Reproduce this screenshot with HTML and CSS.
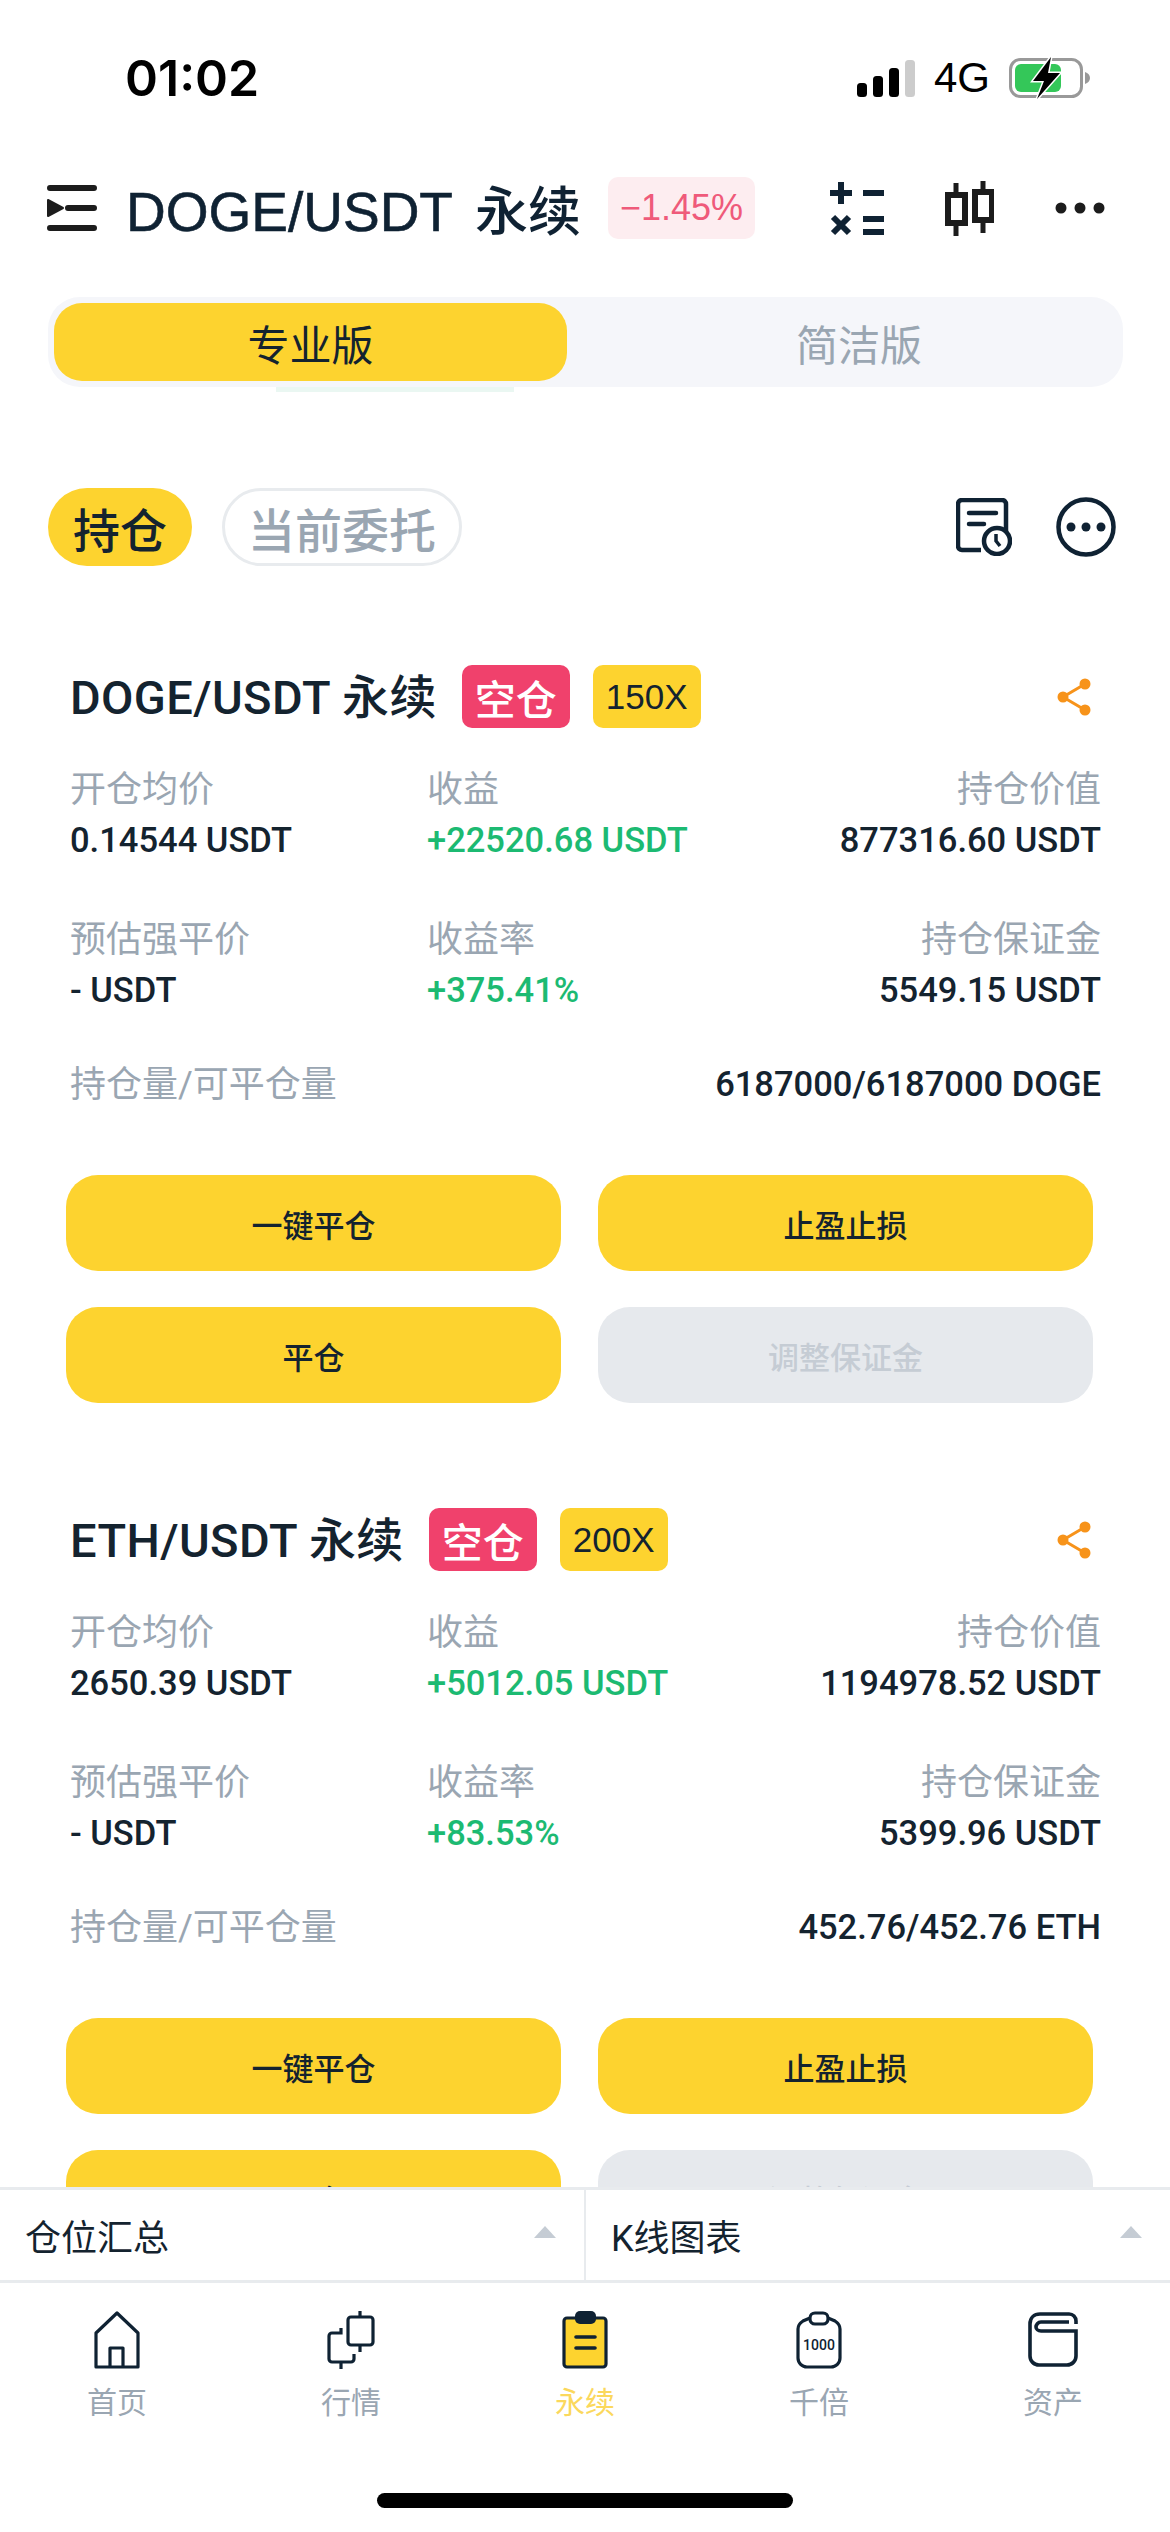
FILE: index.html

```html
<!DOCTYPE html>
<html lang="zh-CN">
<head>
  <meta charset="UTF-8">
  <meta name="viewport" content="width=device-width, initial-scale=1.0">
  <title>DOGE/USDT 永续</title>
  <link rel="stylesheet" href="styles.css">
</head>
<body>
  <svg class="defs" width="0" height="0">
    <symbol id="share" viewBox="0 0 34 38">
      <path d="M28 6 6 19l22 13" fill="none" stroke="#f7931a" stroke-width="3"/>
      <circle cx="6" cy="19" r="5.5" fill="#f7931a"/>
      <circle cx="28" cy="6" r="5.5" fill="#f7931a"/>
      <circle cx="28" cy="32" r="5.5" fill="#f7931a"/>
    </symbol>
  </svg>

  <div class="app">
    <div class="status">
      <span class="time">01:02</span>
      <div class="status-right">
        <svg class="signal" width="58" height="37" viewBox="0 0 58 37">
          <rect x="0" y="23" width="10" height="14" rx="3.5" fill="#000"/>
          <rect x="16" y="16" width="10" height="21" rx="3.5" fill="#000"/>
          <rect x="32" y="8" width="10" height="29" rx="3.5" fill="#000"/>
          <rect x="48" y="0" width="10" height="37" rx="3.5" fill="#ccc"/>
        </svg>
        <span class="net">4G</span>
        <svg class="battery" width="82" height="42" viewBox="0 0 82 42">
          <rect x="1.5" y="2.5" width="71" height="37" rx="10" fill="none" stroke="#999" stroke-width="3"/>
          <rect x="6" y="7" width="46" height="28" rx="6" fill="#34c759"/>
          <path d="M76 15c3 1 5 3 5 6s-2 5-5 6z" fill="#999"/>
          <path d="M42 0 24 24h11l-7 18 23-26H39z" fill="#000" stroke="#fff" stroke-width="3" paint-order="stroke"/>
        </svg>
      </div>
    </div>

    <header class="topbar">
      <svg class="menu-icon" width="50" height="46" viewBox="0 0 50 46">
        <path d="M3 3h44M21 23h26M3 43h44" stroke="#1c1c1c" stroke-width="6" stroke-linecap="round"/>
        <path d="M1 15v16l15-8z" fill="#1c1c1c" stroke="#1c1c1c" stroke-width="2" stroke-linejoin="round"/>
      </svg>
      <h1 class="pair">DOGE/USDT<span class="pair-cn">永续</span></h1>
      <span class="change">−1.45%</span>
      <div class="top-actions">
        <svg width="54" height="55" viewBox="0 0 54 55">
          <path d="M11 1v22M0 12h22M33 12h21M33 38h21M33 51h21" stroke="#0f2233" stroke-width="6"/>
          <path d="M3 36l16 16M19 36 3 52" stroke="#0f2233" stroke-width="6"/>
        </svg>
        <svg width="49" height="55" viewBox="0 0 49 55">
          <path d="M11 2v12M11 42v13M38 0v11M38 39v13" stroke="#1c1c1c" stroke-width="5"/>
          <rect x="3" y="14" width="17" height="28" fill="none" stroke="#1c1c1c" stroke-width="6"/>
          <rect x="30" y="11" width="17" height="28" fill="none" stroke="#1c1c1c" stroke-width="6"/>
        </svg>
        <svg width="50" height="12" viewBox="0 0 50 12">
          <circle cx="6" cy="6" r="5.5" fill="#1c1c1c"/>
          <circle cx="25" cy="6" r="5.5" fill="#1c1c1c"/>
          <circle cx="44" cy="6" r="5.5" fill="#1c1c1c"/>
        </svg>
      </div>
    </header>

    <div class="mode-switch">
      <div class="mode mode-on">专业版</div>
      <div class="mode mode-off">简洁版</div>
    </div>
    <div class="mode-under"></div>

    <div class="tabs">
      <div class="tab tab-on">持仓</div>
      <div class="tab tab-off">当前委托</div>
      <div class="tab-icons">
        <svg width="56" height="58" viewBox="0 0 56 58">
          <path d="M25 52H6a4 4 0 0 1-4-4V6a4 4 0 0 1 4-4h40a4 4 0 0 1 4 4v28" fill="none" stroke="#0f2233" stroke-width="4.5"/>
          <path d="M13 15h27M13 26h15" stroke="#0f2233" stroke-width="4.5" stroke-linecap="round"/>
          <circle cx="41" cy="43" r="13" fill="#fff" stroke="#0f2233" stroke-width="4.5"/>
          <path d="M40 36v7l4 5" fill="none" stroke="#0f2233" stroke-width="3.5"/>
        </svg>
        <svg width="60" height="60" viewBox="0 0 60 60">
          <circle cx="30" cy="30" r="27.5" fill="none" stroke="#0f2233" stroke-width="4.5"/>
          <circle cx="15" cy="30" r="4.5" fill="#0f2233"/>
          <circle cx="30" cy="30" r="4.5" fill="#0f2233"/>
          <circle cx="45" cy="30" r="4.5" fill="#0f2233"/>
        </svg>
      </div>
    </div>

    <main class="positions">
      <section class="card">
        <div class="card-head">
          <h2 class="card-title">DOGE/USDT 永续</h2>
          <span class="tag tag-short">空仓</span>
          <span class="tag tag-lev">150X</span>
          <svg class="share" width="34" height="38"><use href="#share"/></svg>
        </div>
        <div class="stats">
          <div class="stat"><div class="label">开仓均价</div><div class="value">0.14544 USDT</div></div>
          <div class="stat"><div class="label">收益</div><div class="value up">+22520.68 USDT</div></div>
          <div class="stat stat-end"><div class="label">持仓价值</div><div class="value">877316.60 USDT</div></div>
          <div class="stat"><div class="label">预估强平价</div><div class="value">- USDT</div></div>
          <div class="stat"><div class="label">收益率</div><div class="value up">+375.41%</div></div>
          <div class="stat stat-end"><div class="label">持仓保证金</div><div class="value">5549.15 USDT</div></div>
        </div>
        <div class="amount">
          <span class="label">持仓量/可平仓量</span>
          <span class="value">6187000/6187000 DOGE</span>
        </div>
        <div class="actions">
          <button class="btn">一键平仓</button>
          <button class="btn">止盈止损</button>
          <button class="btn">平仓</button>
          <button class="btn btn-off">调整保证金</button>
        </div>
      </section>

      <section class="card">
        <div class="card-head">
          <h2 class="card-title">ETH/USDT 永续</h2>
          <span class="tag tag-short">空仓</span>
          <span class="tag tag-lev">200X</span>
          <svg class="share" width="34" height="38"><use href="#share"/></svg>
        </div>
        <div class="stats">
          <div class="stat"><div class="label">开仓均价</div><div class="value">2650.39 USDT</div></div>
          <div class="stat"><div class="label">收益</div><div class="value up">+5012.05 USDT</div></div>
          <div class="stat stat-end"><div class="label">持仓价值</div><div class="value">1194978.52 USDT</div></div>
          <div class="stat"><div class="label">预估强平价</div><div class="value">- USDT</div></div>
          <div class="stat"><div class="label">收益率</div><div class="value up">+83.53%</div></div>
          <div class="stat stat-end"><div class="label">持仓保证金</div><div class="value">5399.96 USDT</div></div>
        </div>
        <div class="amount">
          <span class="label">持仓量/可平仓量</span>
          <span class="value">452.76/452.76 ETH</span>
        </div>
        <div class="actions">
          <button class="btn">一键平仓</button>
          <button class="btn">止盈止损</button>
          <button class="btn">平仓</button>
          <button class="btn btn-off">调整保证金</button>
        </div>
      </section>
    </main>

    <div class="drawers">
      <div class="drawer"><span>仓位汇总</span><i class="caret"></i></div>
      <div class="drawer"><span>K线图表</span><i class="caret"></i></div>
    </div>

    <nav class="tabbar">
      <a class="nav-item">
        <svg width="46" height="58" viewBox="0 0 46 58">
          <path d="M2 22 23 2l21 20v34H2zM16 56V37h13v19" fill="none" stroke="#0f2233" stroke-width="3.2" stroke-linejoin="round"/>
        </svg>
        <span>首页</span>
      </a>
      <a class="nav-item">
        <svg width="48" height="58" viewBox="0 0 48 58">
          <rect x="21" y="6" width="25" height="28" rx="3" fill="none" stroke="#0f2233" stroke-width="3.2"/>
          <path d="M33 0v6M33 34v7M14 17v5H5a3 3 0 0 0-3 3v23a3 3 0 0 0 3 3h19a3 3 0 0 0 3-3v-5M14 51v7" fill="none" stroke="#0f2233" stroke-width="3.2"/>
        </svg>
        <span>行情</span>
      </a>
      <a class="nav-item nav-on">
        <svg width="46" height="58" viewBox="0 0 46 58">
          <rect x="2" y="7" width="42" height="49" rx="3" fill="#fdd32f" stroke="#0f2233" stroke-width="3.2"/>
          <rect x="13" y="0" width="21" height="13" rx="5" fill="#0f2233"/>
          <path d="M14 26h19M14 37h19" stroke="#0f2233" stroke-width="3.6" stroke-linecap="round"/>
        </svg>
        <span>永续</span>
      </a>
      <a class="nav-item">
        <svg width="46" height="58" viewBox="0 0 46 58">
          <path d="M14 7 7 10c-3 2-5 4-5 8v29c0 5 4 9 9 9h24c5 0 9-4 9-9V18c0-4-2-6-5-8l-7-3" fill="none" stroke="#0f2233" stroke-width="3.2"/>
          <rect x="14" y="2" width="18" height="11" rx="5" fill="none" stroke="#0f2233" stroke-width="3.2"/>
          <text class="thousand" x="23" y="39" text-anchor="middle">1000</text>
        </svg>
        <span>千倍</span>
      </a>
      <a class="nav-item">
        <svg width="50" height="58" viewBox="0 0 50 58">
          <path d="M48 13V10c0-4-3-7-7-7H12C6 3 2 7 2 13v32c0 5 4 9 9 9h28c5 0 9-4 9-9V20H13c-3 0-5-2-5-4s2-5 5-5h28" fill="none" stroke="#0f2233" stroke-width="3.6"/>
        </svg>
        <span>资产</span>
      </a>
    </nav>
    <div class="home-bar"></div>
  </div>
</body>
</html>
```

FILE: styles.css

```css
* {
  box-sizing: border-box;
}

html, body {
  margin: 0;
  padding: 0;
  background: #fff;
}

body {
  font-family: Roboto, "Noto Sans CJK SC", sans-serif;
  color: #14232f;
}

.defs {
  display: block;
  height: 0;
}

.app {
  width: 1170px;
  height: 2532px;
  display: flex;
  flex-direction: column;
  overflow: hidden;
}

/* status bar */
.status {
  height: 156px;
  flex: none;
  display: flex;
  align-items: center;
  justify-content: space-between;
  padding: 0 79px 0 125px;
}

.time {
  font-family: Inter, sans-serif;
  font-size: 50px;
  font-weight: 600;
  color: #000;
}

.status-right {
  display: flex;
  align-items: center;
}

.net {
  font-family: "Liberation Sans", sans-serif;
  font-size: 42px;
  color: #000;
  margin: 0 19px;
}

/* top bar */
.topbar {
  height: 104px;
  flex: none;
  display: flex;
  align-items: center;
  padding: 0 65px 0 47px;
}

.pair {
  margin: 0 0 0 29px;
  font-family: "Liberation Sans", "Noto Sans CJK SC", sans-serif;
  font-size: 55px;
  font-weight: 400;
  color: #0f2233;
  -webkit-text-stroke: 0.6px #0f2233;
}

.pair-cn {
  font-size: 53px;
  font-weight: 500;
  margin-left: 22px;
  -webkit-text-stroke: 0;
}

.change {
  margin-left: 27px;
  width: 147px;
  height: 62px;
  border-radius: 10px;
  background: #fdedf0;
  color: #ef5a7a;
  font-family: "Liberation Sans", sans-serif;
  font-size: 36px;
  display: flex;
  align-items: center;
  justify-content: center;
}

.top-actions {
  margin-left: auto;
  display: flex;
  align-items: center;
  gap: 61px;
}

/* pro / simple switch */
.mode-switch {
  margin: 37px 47px 0 48px;
  height: 90px;
  flex: none;
  display: flex;
  padding: 6px;
  border-radius: 32px;
  background: #f5f6fa;
}

.mode {
  display: flex;
  align-items: center;
  justify-content: center;
  font-size: 42px;
}

.mode-on {
  width: 513px;
  border-radius: 28px;
  background: #fdd32f;
  color: #14232f;
}

.mode-off {
  flex: 1;
  padding-left: 34px;
  color: #9aa6b2;
}

.mode-under {
  width: 238px;
  height: 5px;
  flex: none;
  margin-left: 276px;
  background: #eaf7f2;
}

/* position tabs */
.tabs {
  margin-top: 96px;
  padding: 0 54px 0 48px;
  height: 78px;
  flex: none;
  display: flex;
  align-items: center;
}

.tab {
  height: 78px;
  border-radius: 39px;
  font-size: 47px;
  font-weight: 500;
  display: flex;
  align-items: center;
  justify-content: center;
}

.tab-on {
  width: 144px;
  background: #fdd32f;
}

.tab-off {
  width: 240px;
  margin-left: 30px;
  border: 3px solid #e8ebee;
  color: #9aa6b2;
}

.tab-icons {
  margin-left: auto;
  display: flex;
  align-items: center;
  gap: 44px;
}

/* position cards */
.positions {
  flex: 1;
  min-height: 0;
  overflow: hidden;
  padding-top: 99px;
}

.card {
  padding: 0 69px 0 66px;
  margin-bottom: 105px;
}

.card-head {
  height: 63px;
  padding-left: 4px;
  display: flex;
  align-items: center;
}

.card-title {
  margin: 0 25px 0 0;
  padding-bottom: 6px;
  font-size: 47px;
  font-weight: 500;
  letter-spacing: 0.4px;
  color: #14232f;
}

.tag {
  height: 63px;
  border-radius: 10px;
  padding: 0 13px;
  display: flex;
  align-items: center;
}

.tag-short {
  background: #f0416c;
  color: #fff;
  font-size: 41px;
  font-weight: 500;
}

.tag-lev {
  margin-left: 23px;
  background: #fdd32f;
  color: #14232f;
  font-family: "Liberation Sans", sans-serif;
  font-size: 35px;
}

.share {
  margin-left: auto;
  margin-right: 10px;
}

.stats {
  margin-top: 37px;
  padding-left: 4px;
  display: grid;
  grid-template-columns: 357px 1fr auto;
  row-gap: 49px;
}

.stat-end {
  text-align: right;
}

.label {
  height: 50px;
  line-height: 50px;
  font-size: 36px;
  color: #9aa6b2;
}

.value {
  height: 51px;
  line-height: 51px;
  font-size: 34.5px;
  font-weight: 500;
  white-space: nowrap;
}

.up {
  color: #1cba72;
}

.amount {
  margin-top: 43px;
  padding-left: 4px;
  display: flex;
  justify-content: space-between;
  align-items: center;
}

.actions {
  margin-top: 65px;
  width: 1027px;
  display: grid;
  grid-template-columns: 1fr 1fr;
  gap: 36px 37px;
}

.btn {
  height: 96px;
  border: none;
  border-radius: 32px;
  background: #fdd32f;
  color: #14232f;
  font-family: "Noto Sans CJK SC", sans-serif;
  font-size: 31px;
  font-weight: 500;
  padding: 0;
}

.btn-off {
  background: #e6e9ed;
  color: #c5ccd4;
}

/* bottom drawers */
.drawers {
  height: 96px;
  flex: none;
  display: flex;
  border-top: 3px solid #e8ebee;
  border-bottom: 3px solid #e8ebee;
  background: #fff;
}

.drawer {
  flex: 1;
  display: flex;
  align-items: center;
  justify-content: space-between;
  padding: 0 28px 0 25px;
  font-size: 36px;
  color: #14232f;
}

.drawer + .drawer {
  border-left: 2px solid #e8ebee;
}

.caret {
  width: 0;
  height: 0;
  margin-bottom: 6px;
  border-left: 11px solid transparent;
  border-right: 11px solid transparent;
  border-bottom: 12px solid #c5ccd4;
}

/* tab bar */
.tabbar {
  flex: none;
  padding-top: 28px;
  display: grid;
  grid-template-columns: repeat(5, 1fr);
}

.nav-item {
  display: flex;
  flex-direction: column;
  align-items: center;
  gap: 14px;
  font-size: 30px;
  line-height: 40px;
  color: #9aa6b2;
}

.nav-on {
  color: #fbd85c;
}

.thousand {
  font-family: Roboto, sans-serif;
  font-size: 14px;
  font-weight: 500;
  fill: #0f2233;
}

.home-bar {
  flex: none;
  width: 416px;
  height: 15px;
  margin: 70px auto 24px;
  border-radius: 8px;
  background: #000;
}
```
